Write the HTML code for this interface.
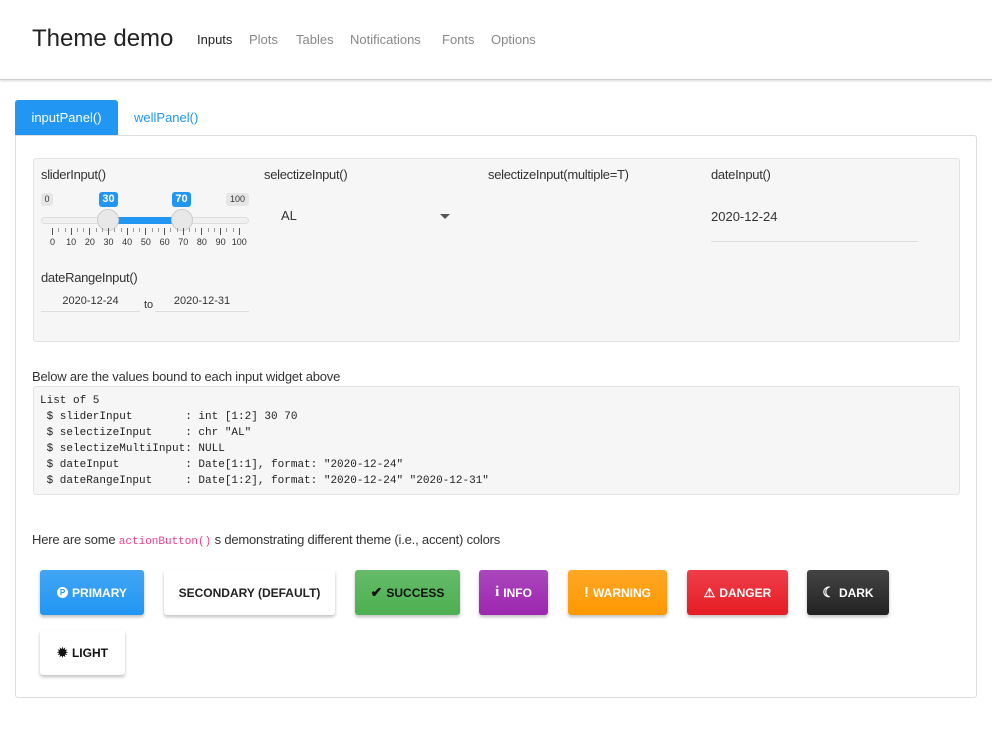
<!DOCTYPE html>
<html><head><meta charset="utf-8"><style>
*{box-sizing:border-box;margin:0;padding:0}
body{width:992px;height:744px;background:#fff;font-family:"Liberation Sans",sans-serif;color:#222;position:relative;overflow:hidden}
.a{position:absolute;white-space:nowrap}
.nav{position:absolute;left:0;top:0;width:992px;height:80px;border-bottom:1px solid #ccc;box-shadow:0 1px 2px rgba(0,0,0,.15)}
.lbl{font-size:13px;color:#333;letter-spacing:-.3px}
.well{position:absolute;left:33px;top:158px;width:927px;height:184px;background:#f6f6f6;border:1px solid #e3e3e3;border-radius:3px}
.tk{position:absolute;width:1px;background:#555}
.tl{position:absolute;font-size:9px;color:#333;transform:translateX(-50%);top:237px}
.btn{position:absolute;height:45px;border-radius:3px;font-size:12px;font-weight:bold;display:flex;align-items:center;justify-content:center;box-shadow:0 2px 3px rgba(0,0,0,.25);color:#fff;gap:4px}
pre{font-family:"Liberation Mono",monospace;font-size:11px;line-height:16px;color:#222}
</style></head><body>
<div class="nav">
<div class="a" style="left:32px;top:25px;font-size:24px;color:#222">Theme demo</div>
<div class="a" style="left:197px;top:32px;font-size:13px;color:#222">Inputs</div>
<div class="a" style="left:249px;top:32px;font-size:13px;color:#888">Plots</div>
<div class="a" style="left:296px;top:32px;font-size:13px;color:#888">Tables</div>
<div class="a" style="left:350px;top:32px;font-size:13px;color:#888">Notifications</div>
<div class="a" style="left:442px;top:32px;font-size:13px;color:#888">Fonts</div>
<div class="a" style="left:491px;top:32px;font-size:13px;color:#888">Options</div>
</div>
<div class="a" style="left:15px;top:100px;width:103px;height:35px;background:#2196f3;border-radius:3px 3px 0 0;color:#fff;font-size:13px;line-height:35px;text-align:center">inputPanel()</div>
<div class="a" style="left:134px;top:110px;font-size:13px;color:#2196f3">wellPanel()</div>
<div class="a" style="left:15px;top:135px;width:962px;height:563px;border:1px solid #ddd;border-radius:0 3px 3px 3px"></div>
<div class="well"></div>
<div class="a lbl" style="left:41px;top:167px">sliderInput()</div>
<div class="a lbl" style="left:264px;top:167px">selectizeInput()</div>
<div class="a lbl" style="left:488px;top:167px">selectizeInput(multiple=T)</div>
<div class="a lbl" style="left:711px;top:167px">dateInput()</div>
<div class="a lbl" style="left:41px;top:270px">dateRangeInput()</div>
<div class="a" style="left:41px;top:193px;width:12px;height:13px;background:#e6e6e6;border-radius:3px;font-size:9px;color:#333;text-align:center;line-height:13px">0</div>
<div class="a" style="left:226px;top:193px;width:23px;height:13px;background:#e6e6e6;border-radius:3px;font-size:9px;color:#333;text-align:center;line-height:13px">100</div>
<div class="a" style="left:99px;top:192px;width:19px;height:15px;background:#2196f3;border-radius:3px;font-size:11px;color:#fff;text-align:center;line-height:15px;font-weight:bold">30</div>
<div class="a" style="left:172px;top:192px;width:19px;height:15px;background:#2196f3;border-radius:3px;font-size:11px;color:#fff;text-align:center;line-height:15px;font-weight:bold">70</div>
<div class="a" style="left:41px;top:217px;width:208px;height:7px;background:#f0f0f0;border:1px solid #ddd;border-radius:4px"></div>
<div class="a" style="left:108px;top:217px;width:74px;height:7px;background:#2196f3"></div>
<div class="a" style="left:97px;top:209px;width:22px;height:22px;border-radius:50%;background:#e8e8e8;border:1px solid #ccc"></div>
<div class="a" style="left:171px;top:209px;width:22px;height:22px;border-radius:50%;background:#e8e8e8;border:1px solid #ccc"></div>
<div id="ticks"></div>
<script>
var h='';for(var i=0;i<=30;i++){var x=52+i*18.68/3;var maj=i%3==0;h+='<div class="tk" style="left:'+x.toFixed(1)+'px;top:228px;height:'+(maj?7:4)+'px;background:'+(maj?'#555':'#999')+'"></div>';if(maj)h+='<div class="tl" style="left:'+(x+0.5).toFixed(1)+'px">'+(i/3*10)+'</div>';}
document.getElementById('ticks').innerHTML=h;
</script>
<div class="a" style="left:41px;top:295px;width:99px;font-size:11px;color:#333;text-align:center">2020-12-24</div>
<div class="a" style="left:41px;top:311px;width:99px;height:1px;background:#ddd"></div>
<div class="a" style="left:144px;top:299px;font-size:11px;color:#333">to</div>
<div class="a" style="left:155px;top:295px;width:94px;font-size:11px;color:#333;text-align:center">2020-12-31</div>
<div class="a" style="left:155px;top:311px;width:94px;height:1px;background:#ddd"></div>
<div class="a" style="left:281px;top:208px;font-size:13px;color:#333">AL</div>
<div class="a" style="left:440px;top:214px;width:0;height:0;border-left:5px solid transparent;border-right:5px solid transparent;border-top:5px solid #555"></div>
<div class="a" style="left:711px;top:209px;font-size:13px;color:#333">2020-12-24</div>
<div class="a" style="left:711px;top:241px;width:207px;height:1px;background:#ddd"></div>
<div class="a" style="left:32px;top:369px;font-size:13px;color:#333;letter-spacing:-.2px">Below are the values bound to each input widget above</div>
<div class="a" style="left:33px;top:386px;width:927px;height:109px;background:#f6f6f6;border:1px solid #e3e3e3;border-radius:3px;padding:6px 0 0 6px"><pre>List of 5
 $ sliderInput        : int [1:2] 30 70
 $ selectizeInput     : chr "AL"
 $ selectizeMultiInput: NULL
 $ dateInput          : Date[1:1], format: "2020-12-24"
 $ dateRangeInput     : Date[1:2], format: "2020-12-24" "2020-12-31"</pre></div>
<div class="a" style="left:32px;top:532px;font-size:13px;color:#333;letter-spacing:-.2px">Here are some <span style="font-family:'Liberation Mono',monospace;font-size:11px;color:#e83e8c;letter-spacing:0">actionButton()</span> s demonstrating different theme (i.e., accent) colors</div>
<div class="btn" style="left:40px;top:570px;width:104px;background:linear-gradient(#42a5f5,#2196f3)"><span style="display:inline-block;width:11px;height:11px;border-radius:50%;background:#fff;color:#2196f3;font-size:8px;line-height:11px;text-align:center">P</span>PRIMARY</div>
<div class="btn" style="left:164px;top:570px;width:171px;background:#fff;color:#222">SECONDARY (DEFAULT)</div>
<div class="btn" style="left:355px;top:570px;width:105px;background:linear-gradient(#66bb6a,#4caf50);color:#111"><span style="font-size:14px">✔</span>SUCCESS</div>
<div class="btn" style="left:479px;top:570px;width:69px;background:linear-gradient(#ab47bc,#9c27b0)"><span style="font-family:'Liberation Serif',serif;font-size:15px">i</span>INFO</div>
<div class="btn" style="left:568px;top:570px;width:99px;background:linear-gradient(#ffa726,#ff9800)"><span style="font-size:15px">!</span>WARNING</div>
<div class="btn" style="left:687px;top:570px;width:101px;background:linear-gradient(#ef3e4a,#e51c23)"><span style="font-size:13px">⚠</span>DANGER</div>
<div class="btn" style="left:807px;top:570px;width:82px;background:linear-gradient(#444,#222)"><span style="font-size:14px">☾</span>DARK</div>
<div class="btn" style="left:40px;top:630px;width:85px;background:#fff;color:#111"><span style="font-size:13px">✹</span>LIGHT</div>
</body></html>
